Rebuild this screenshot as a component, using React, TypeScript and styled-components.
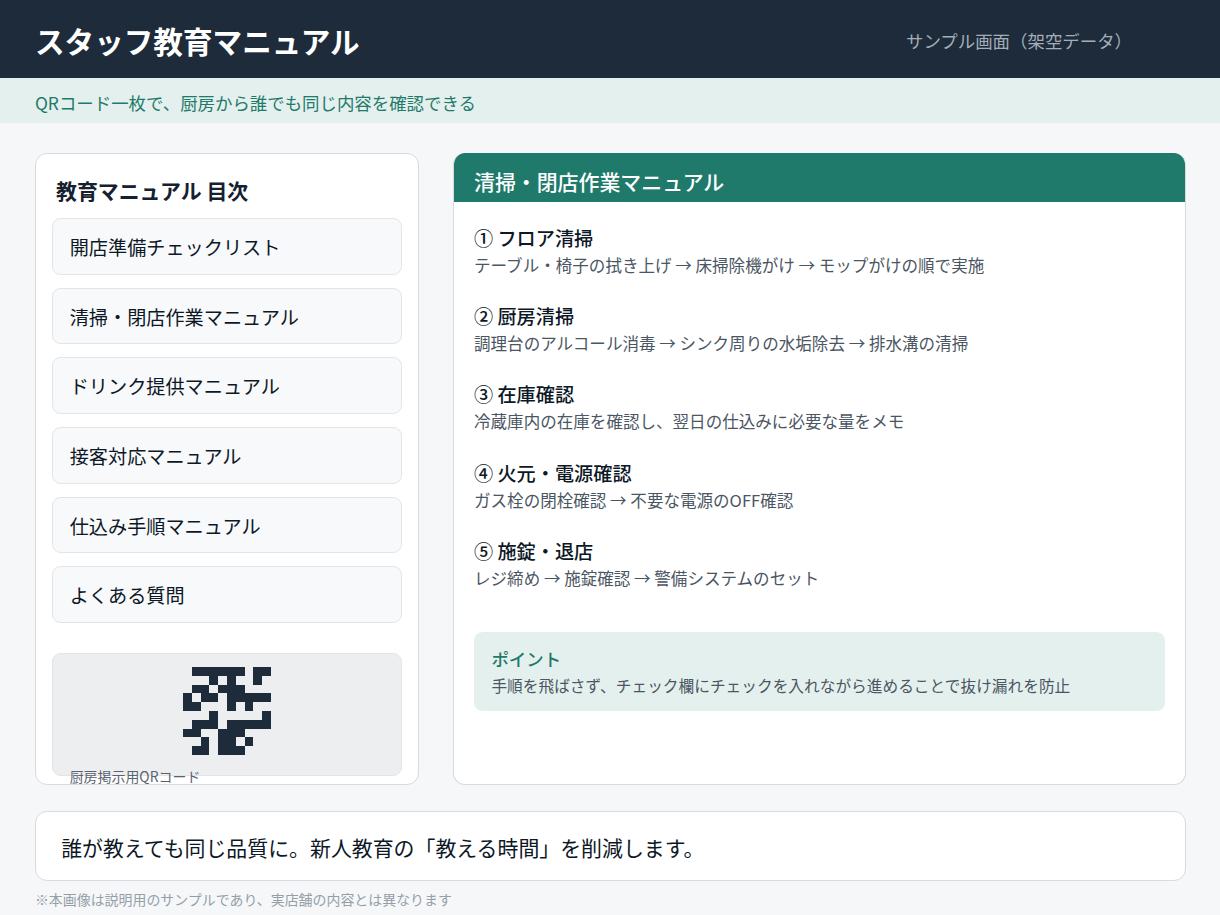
import React from "react";
import styled, { createGlobalStyle } from "styled-components";

const GlobalStyle = createGlobalStyle`
  *, *::before, *::after { box-sizing: border-box; }
  body {
    margin: 0;
    background: #f5f7f9;
    font-family: "Noto Sans CJK JP", "Noto Sans", sans-serif;
    color: #0d1826;
  }
  h1, h2, h3, p, ul, ol { margin: 0; padding: 0; font-weight: 400; }
  ul, ol { list-style: none; }
`;

const Page = styled.div`
  width: 1220px;
  height: 915px;
  overflow: hidden;
  display: flex;
  flex-direction: column;
  white-space: nowrap;
`;

const Header = styled.header`
  flex: none;
  height: 78px;
  padding: 3px 88px 0 35px;
  display: flex;
  align-items: center;
  justify-content: space-between;
  background: #1d2b3a;
`;

const AppTitle = styled.h1`
  font-size: 29.6px;
  line-height: 40px;
  font-weight: 700;
  color: #fff;
`;

const SampleLabel = styled.span`
  font-size: 17.43px;
  line-height: 26px;
  color: #a4aeb9;
`;

const Tagline = styled.p`
  flex: none;
  height: 45px;
  padding: 3px 0 0 34.9px;
  font-size: 17.43px;
  line-height: 43px;
  color: #1f7a6b;
  background: #e4f0ed;
`;

const Columns = styled.main`
  flex: none;
  display: grid;
  grid-template-columns: 384px 733px;
  column-gap: 34px;
  height: 632px;
  margin: 30px 0 0 35px;
`;

const Panel = styled.section`
  background: #fff;
  border: 1px solid #d6dbdf;
  border-radius: 12px;
`;

const ContentsPanel = styled(Panel)`
  padding: 21px 16px 0;
`;

const ContentsTitle = styled.h2`
  padding-left: 4px;
  font-size: 20.91px;
  line-height: 30px;
  font-weight: 700;
  color: #15212f;
`;

const ContentsList = styled.ul`
  margin-top: 13px;
  display: flex;
  flex-direction: column;
  gap: 13px;
`;

const ContentsItem = styled.li`
  height: 56.7px;
  padding-left: 16.7px;
  border: 1px solid #e1e5e8;
  border-radius: 8.7px;
  background: #f8f9fb;
  font-size: 19.17px;
  line-height: 56.4px;
`;

const QrCard = styled.div`
  height: 123px;
  margin-top: 30px;
  padding-top: 13px;
  border: 1px solid #e1e5e8;
  border-radius: 8.7px;
  background: #edeef0;
`;

const QrImage = styled.svg`
  display: block;
  width: 88px;
  height: 88px;
  margin: 0 auto;
  fill: #1d2b3a;
`;

const QrCaption = styled.p`
  margin: 11px 0 0 16.7px;
  font-size: 13.94px;
  line-height: 20px;
  color: #5a6470;
`;

const ManualPanel = styled(Panel)`
  overflow: hidden;
  border-top: 0;
`;

const ManualTitle = styled.h2`
  height: 49px;
  margin: 0 -1px;
  padding: 3px 0 0 21px;
  font-size: 20.91px;
  line-height: 50px;
  font-weight: 500;
  color: #fff;
  background: #1f7a6b;
`;

const Steps = styled.ol`
  padding: 21.55px 20px 0;
`;

const Step = styled.li`
  height: 78.43px;
`;

const StepTitle = styled.h3`
  font-size: 19.17px;
  line-height: 28px;
  font-weight: 500;
`;

const StepText = styled.p`
  font-size: 16.56px;
  line-height: 27px;
  color: #4b5663;
`;

const Point = styled.aside`
  height: 79px;
  margin: 16.45px 20px 0;
  padding: 14px 17.4px;
  border-radius: 8.7px;
  background: #e4f0ed;
`;

const PointTitle = styled.h3`
  font-size: 17.43px;
  line-height: 26px;
  font-weight: 500;
  color: #1f7a6b;
`;

const PointText = styled.p`
  font-size: 15.69px;
  line-height: 27px;
  color: #4b5663;
`;

const Summary = styled.section`
  flex: none;
  width: 1151px;
  height: 70px;
  margin: 26px 0 0 35px;
  padding: 2px 0 0 25.2px;
  border: 1px solid #d6dbdf;
  border-radius: 12px;
  background: #fff;
  font-size: 20.91px;
  line-height: 67px;
`;

const Footnote = styled.footer`
  padding: 8px 0 0 34.9px;
  font-size: 13.94px;
  line-height: 20px;
  color: #969fa8;
`;

const contents = [
  "開店準備チェックリスト",
  "清掃・閉店作業マニュアル",
  "ドリンク提供マニュアル",
  "接客対応マニュアル",
  "仕込み手順マニュアル",
  "よくある質問",
];

const steps = [
  ["① フロア清掃", "テーブル・椅子の拭き上げ → 床掃除機がけ → モップがけの順で実施"],
  ["② 厨房清掃", "調理台のアルコール消毒 → シンク周りの水垢除去 → 排水溝の清掃"],
  ["③ 在庫確認", "冷蔵庫内の在庫を確認し、翌日の仕込みに必要な量をメモ"],
  ["④ 火元・電源確認", "ガス栓の閉栓確認 → 不要な電源のOFF確認"],
  ["⑤ 施錠・退店", "レジ締め → 施錠確認 → 警備システムのセット"],
];

const qrRows = [
  ".######.##",
  "...#.#..#.",
  ".##.###...",
  "#.##.#####",
  "##...#.#..",
  "...#.....#",
  ".###.#####",
  "##..###...",
  "..#.##.#..",
  ".##.###...",
];

function QrCode() {
  return (
    <QrImage viewBox="0 0 10 10" shapeRendering="crispEdges" aria-hidden="true">
      {qrRows.flatMap((row, y) =>
        [...row].map((cell, x) =>
          cell === "#" ? <rect key={`${x}-${y}`} x={x} y={y} width="1" height="1" /> : null
        )
      )}
    </QrImage>
  );
}

export default function App() {
  return (
    <>
      <GlobalStyle />
      <Page>
        <Header>
          <AppTitle>スタッフ教育マニュアル</AppTitle>
          <SampleLabel>サンプル画面（架空データ）</SampleLabel>
        </Header>
        <Tagline>QRコード一枚で、厨房から誰でも同じ内容を確認できる</Tagline>
        <Columns>
          <ContentsPanel>
            <ContentsTitle>教育マニュアル 目次</ContentsTitle>
            <ContentsList>
              {contents.map((label) => (
                <ContentsItem key={label}>{label}</ContentsItem>
              ))}
            </ContentsList>
            <QrCard>
              <QrCode />
              <QrCaption>厨房掲示用QRコード</QrCaption>
            </QrCard>
          </ContentsPanel>
          <ManualPanel>
            <ManualTitle>清掃・閉店作業マニュアル</ManualTitle>
            <Steps>
              {steps.map(([title, text]) => (
                <Step key={title}>
                  <StepTitle>{title}</StepTitle>
                  <StepText>{text}</StepText>
                </Step>
              ))}
            </Steps>
            <Point>
              <PointTitle>ポイント</PointTitle>
              <PointText>手順を飛ばさず、チェック欄にチェックを入れながら進めることで抜け漏れを防止</PointText>
            </Point>
          </ManualPanel>
        </Columns>
        <Summary>誰が教えても同じ品質に。新人教育の「教える時間」を削減します。</Summary>
        <Footnote>※本画像は説明用のサンプルであり、実店舗の内容とは異なります</Footnote>
      </Page>
    </>
  );
}
